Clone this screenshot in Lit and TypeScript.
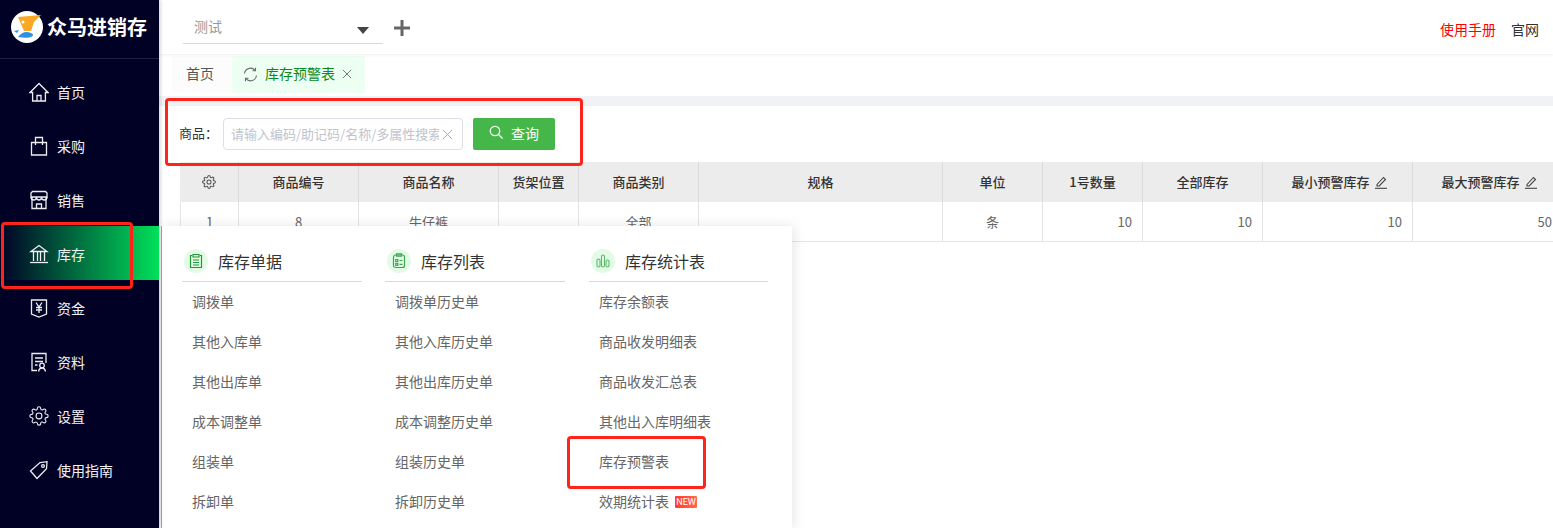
import { LitElement, html, css, svg } from "lit";
import { customElement } from "lit/decorators.js";

const GEAR = "M19.4 15a1.65 1.65 0 0 0 .33 1.82l.06.06a2 2 0 0 1 0 2.83 2 2 0 0 1-2.83 0l-.06-.06a1.65 1.65 0 0 0-1.82-.33 1.65 1.65 0 0 0-1 1.51V21a2 2 0 0 1-2 2 2 2 0 0 1-2-2v-.09A1.65 1.65 0 0 0 9 19.4a1.65 1.65 0 0 0-1.82.33l-.06.06a2 2 0 0 1-2.83 0 2 2 0 0 1 0-2.83l.06-.06a1.65 1.65 0 0 0 .33-1.82 1.65 1.65 0 0 0-1.51-1H3a2 2 0 0 1-2-2 2 2 0 0 1 2-2h.09A1.65 1.65 0 0 0 4.6 9a1.65 1.65 0 0 0-.33-1.82l-.06-.06a2 2 0 0 1 0-2.83 2 2 0 0 1 2.83 0l.06.06a1.65 1.65 0 0 0 1.82.33H9a1.65 1.65 0 0 0 1-1.51V3a2 2 0 0 1 2-2 2 2 0 0 1 2 2v.09a1.65 1.65 0 0 0 1 1.51 1.65 1.65 0 0 0 1.82-.33l.06-.06a2 2 0 0 1 2.83 0 2 2 0 0 1 0 2.83l-.06.06a1.65 1.65 0 0 0-.33 1.82V9a1.65 1.65 0 0 0 1.51 1H21a2 2 0 0 1 2 2 2 2 0 0 1-2 2h-.09a1.65 1.65 0 0 0-1.51 1z";

const ICONS: Record<string, unknown> = {
  home: svg`<path d="M1 10.500 10 1.500l9 9h-2.600V19H3.600v-8.500z"/><path d="M8 19v-5.500h4V19"/>`,
  bag: svg`<path d="M2.500 6.500h15V19h-15z"/><path d="M6.500 9V1.500h7V9"/>`,
  store: svg`<path d="M3.500 1.500h13l1.500 1.500v4H2V3z"/><path d="M3 7v11.500h14V7"/><path d="M2 7c0 4 5.500 4 5.500 0 0 4 5 4 5 0 0 4 5.500 4 5.500 0"/><path d="M7.500 18.500v-4.500h5v4.500"/>`,
  bank: svg`<path d="M2 7.500 10 1.500l8 6z"/><path d="M4.500 8v9M8.500 8v9M11.500 8v9M15.500 8v9"/><path d="M1 18.500h18"/>`,
  money: svg`<path d="M2.500 2h15v14l-7.500 3-7.500-3z"/><path d="M7 4.500l3 4.500 3-4.500M10 9v6M7 9.500h6M7 12h6"/>`,
  doc: svg`<path d="M8 18.500H3V1.500h14v9.500"/><path d="M6 6h8M6 9.500h8M6 13h2.500"/><circle cx="13" cy="13.500" r="2.300"/><path d="M9.500 19.500c.5-2.500 2-3.500 3.500-3.500s3 1 3.500 3.500"/>`,
  gear: svg`<g transform="scale(.833)"><path d="${GEAR}"/><circle cx="12" cy="12" r="3.500"/></g>`,
  tag: svg`<path d="M1.500 11 11 2.500l7-.8-.5 7L8 18.500z"/><circle cx="14" cy="6" r="1.400"/>`,
};

const MENU = [
  ["home", "首页"], ["bag", "采购"], ["store", "销售"], ["bank", "库存"],
  ["money", "资金"], ["doc", "资料"], ["gear", "设置"], ["tag", "使用指南"],
];

const COLS = [
  { head: "商品编号", cell: "8" }, { head: "商品名称", cell: "牛仔裤" }, { head: "货架位置", cell: "" },
  { head: "商品类别", cell: "全部" }, { head: "规格", cell: "" }, { head: "单位", cell: "条" },
  { head: "1号数量", cell: "10", num: true }, { head: "全部库存", cell: "10", num: true },
  { head: "最小预警库存", cell: "10", num: true, edit: true }, { head: "最大预警库存", cell: "50", num: true, edit: true },
];

const PANEL = [
  { title: "库存单据", icon: "a", items: ["调拨单", "其他入库单", "其他出库单", "成本调整单", "组装单", "拆卸单"] },
  { title: "库存列表", icon: "b", items: ["调拨单历史单", "其他入库历史单", "其他出库历史单", "成本调整历史单", "组装历史单", "拆卸历史单"] },
  { title: "库存统计表", icon: "c", items: ["库存余额表", "商品收发明细表", "商品收发汇总表", "其他出入库明细表", "库存预警表", "效期统计表"] },
];

const PANEL_ICONS: Record<string, unknown> = {
  a: svg`<g fill="none" stroke="#1f9a35" stroke-width="1.200"><path d="M8 6.500H6.500v12h11v-12H16"/><path d="M9 5.500h6v2.500H9z"/><path d="M9 11h6M9 13.500h6M9 16h6"/></g>`,
  b: svg`<g fill="none" stroke="#3fa650" stroke-width="1.200"><rect x="6.500" y="6" width="11" height="12.500" rx="2"/><path d="M9.500 4.800h5v2.400h-5z"/><path d="M8.800 10.500h2v2h-2zM8.800 14.300h2v2h-2zM12.500 11.500h3M12.500 15.300h3"/></g>`,
  c: svg`<g fill="none" stroke="#5cb86b" stroke-width="1.100"><rect x="6" y="10" width="3" height="8" rx="1.500"/><rect x="10.500" y="6" width="3" height="12" rx="1.500"/><rect x="15" y="11" width="3" height="7" rx="1.500"/></g>`,
};

@customElement("app-root")
export class AppRoot extends LitElement {
  static styles = css`
    :host {
      display: flex;
      position: relative;
      width: 1553px;
      height: 528px;
      overflow: hidden;
      background: #fff;
      font-family: "Noto Sans CJK SC", "Liberation Sans", sans-serif;
      color: #333;
    }
    .side {
      width: 159px;
      flex: none;
      background: #010126;
      color: #fff;
      position: relative;
      z-index: 3;
      box-shadow: 2px 0 3px rgba(0, 0, 0, .14);
    }
    .logo {
      height: 59px;
      box-sizing: border-box;
      border-bottom: 1px solid #22223f;
      display: flex;
      align-items: center;
      padding: 0 0 5px 11px;
      gap: 4px;
      font-size: 20px;
      font-weight: 700;
      line-height: 24px;
      margin-bottom: 5px;
    }
    .logo svg { width: 32px; height: 32px; flex: none; }
    .nav {
      height: 54px;
      display: flex;
      align-items: center;
      padding-left: 29px;
      gap: 8px;
      font-size: 14px;
      line-height: 20px;
      color: #f2f2f6;
    }
    .nav.on { background: linear-gradient(90deg, #010126 0%, #00e05a 100%); }
    .nav span { position: relative; top: 1px; }
    .nav svg { width: 20px; height: 20px; flex: none; fill: none; stroke: #eeeef2; stroke-width: 1.300; position: relative; top: 1px; }
    .main { flex: 1; min-width: 0; display: flex; flex-direction: column; }
    .top {
      height: 54px;
      flex: none;
      display: flex;
      align-items: flex-start;
      padding-left: 24px;
      box-shadow: 0 1px 3px rgba(0, 0, 0, .07);
      position: relative;
      z-index: 1;
    }
    .select {
      width: 200px;
      height: 44px;
      box-sizing: border-box;
      border-bottom: 1px solid #d9d9d9;
      display: flex;
      align-items: center;
      justify-content: space-between;
      padding: 9px 14px 0 11px;
      font-size: 14px;
      line-height: 20px;
      color: #999;
    }
    .select i {
      width: 0; height: 0; margin-top: 9px;
      border-left: 6px solid transparent;
      border-right: 6px solid transparent;
      border-top: 7px solid #444;
    }
    .plus { margin: 20px 0 0 11px; width: 16px; height: 16px; flex: none; }
    .links {
      margin-left: auto;
      padding: 19px 14px 0 0;
      display: flex;
      gap: 15px;
      font-size: 14px;
      line-height: 20px;
    }
    .links .red { color: #f00; }
    .tabs { height: 42px; flex: none; display: flex; padding: 2px 0 0 13px; box-sizing: border-box; font-size: 14px; line-height: 20px; }
    .tab { height: 37px; box-sizing: border-box; padding-bottom: 3px; display: flex; align-items: center; }
    .tab.home { width: 60px; justify-content: center; color: #555; background: #fcfcfc; padding-right: 4px; }
    .tab.act {
      width: 133px;
      background: #edfff3;
      color: #0a8a1f;
      padding-left: 11px;
      gap: 7px;
    }
    .tab.act svg { width: 15px; height: 15px; flex: none; margin-top: 2px; }
    .tab.act .x { width: 10px; height: 10px; margin-left: 0; }
    .band { height: 10px; flex: none; background: #f0f2f5; }
    .content { flex: 1; padding: 12px 0 0 21px; min-height: 0; }
    .search { display: flex; align-items: center; height: 32px; font-size: 13px; color: #333; }
    .search label { width: 44px; margin-left: -1px; flex: none; line-height: 20px; padding-bottom: 2px; }
    .input {
      width: 240px;
      height: 32px;
      box-sizing: border-box;
      border: 1px solid #dcdfe6;
      border-radius: 4px;
      display: flex;
      align-items: center;
      padding: 0 4px 2px 7px;
      gap: 3px;
      color: #c0c4cc;
    }
    .input span { flex: 1; min-width: 0; overflow: hidden; white-space: nowrap; }
    .input svg { width: 11px; height: 11px; flex: none; margin: 2px 5px 0 0; }
    .btn {
      width: 82px;
      height: 32px;
      margin-left: 10px;
      box-sizing: border-box;
      padding-bottom: 2px;
      background: #45b649;
      border-radius: 2px;
      color: #fff;
      display: flex;
      align-items: center;
      justify-content: center;
      gap: 8px;
      font-size: 14px;
    }
    .btn svg { width: 14px; height: 14px; margin-top: -2px; }
    .table {
      margin-top: 12px;
      width: 1383px;
      display: grid;
      grid-template-columns: 59px 120px 140px 80px 120px 244px 100px 100px 120px 150px 150px;
      grid-auto-rows: 40px;
      font-size: 13px;
    }
    .th, .td {
      display: flex;
      align-items: center;
      justify-content: center;
      box-sizing: border-box;
      border-right: 1px solid #e3e3e3;
      white-space: nowrap;
    }
    .th { background: #ececec; font-weight: 500; color: #333; border-right-color: #dcdcdc; gap: 4px; padding-bottom: 2px; }
    .th.edit { padding-left: 4px; }
    .th svg { width: 14px; height: 14px; flex: none; margin-top: 2px; }
    .td { color: #666; border-bottom: 1px solid #e6e6e6; }
    .td.num { justify-content: flex-end; padding-right: 10px; }
    .td.first { border-left: 1px solid #e6e6e6; }
    .panel {
      position: absolute;
      left: 161px;
      top: 226px;
      width: 631px;
      height: 302px;
      box-sizing: border-box;
      background: #fff;
      border-left: 1px solid #7fbf85;
      box-shadow: 2px 0 12px rgba(0, 0, 0, .1);
      z-index: 2;
      padding: 23px 0 0 20px;
      display: grid;
      grid-template-columns: 180px 180px 180px;
      column-gap: 23px;
    }
    .pcol:last-child { margin-left: 1px; }
    .phead {
      height: 32px;
      border-bottom: 1px solid #d9d9d9;
      display: flex;
      align-items: flex-start;
      padding-left: 2px;
      gap: 10px;
      font-size: 16px;
      line-height: 24px;
      color: #333;
    }
    .phead svg { width: 24px; height: 24px; flex: none; }
    .pitem {
      height: 40px;
      box-sizing: border-box;
      padding: 0 0 2px 10px;
      display: flex;
      align-items: center;
      gap: 6px;
      font-size: 14px;
      color: #666;
    }
    .new {
      width: 22px;
      height: 12px;
      margin-top: 2px;
      background: linear-gradient(90deg, #ff3b30, #ff6b4a);
      border-radius: 1px;
      color: #fff;
      font: 9px/12px "Roboto", sans-serif;
      text-align: center;
    }
    .mark {
      position: absolute;
      box-sizing: border-box;
      border: 3px solid #ff2419;
      border-radius: 4px;
      z-index: 5;
    }
    .m1 { left: 1px; top: 222px; width: 132px; height: 67px; }
    .m2 { left: 165px; top: 98px; width: 418px; height: 68px; }
    .m3 { left: 567px; top: 436px; width: 139px; height: 53px; }
  `;

  render() {
    const pencil = html`<svg viewBox="0 0 14 14" fill="none" stroke="#444" stroke-width="1.100"><path d="M3 9.500 9.500 2.500l2 1.900-6.300 6.600H3z"/><path d="M1 13.300h12"/></svg>`;
    const cross = html`<svg class="x" viewBox="0 0 11 11" fill="none" stroke="#777" stroke-width="1.100"><path d="M1 1l9 9M10 1l-9 9"/></svg>`;
    return html`
      <aside class="side">
        <div class="logo">
          <svg viewBox="0 0 32 32">
            <circle cx="16" cy="16" r="16" fill="#fff"/>
            <path d="M7 6 30 4 23 11 20 20 13 20z" fill="#f9a825"/>
            <circle cx="12" cy="11" r="1.500" fill="#fff"/>
            <path d="M7 26c4-5 8-6 13-4 2 1 3 2 1 3.500-4 2-9 1-14 .5z" fill="#2f8fe0"/>
            <path d="M3 20l5-1-2 3z" fill="#2f8fe0"/>
          </svg>
          <span>众马进销存</span>
        </div>
        ${MENU.map(([icon, label]) => html`
          <div class="nav ${label === "库存" ? "on" : ""}">
            <svg viewBox="0 0 20 20">${ICONS[icon]}</svg><span>${label}</span>
          </div>`)}
      </aside>
      <div class="main">
        <header class="top">
          <div class="select"><span>测试</span><i></i></div>
          <svg class="plus" viewBox="0 0 16 16"><path d="M8 0v16M0 8h16" stroke="#666" stroke-width="3"/></svg>
          <div class="links"><span class="red">使用手册</span><span>官网</span></div>
        </header>
        <nav class="tabs">
          <div class="tab home">首页</div>
          <div class="tab act">
            <svg viewBox="0 0 15 15" fill="none" stroke="#666" stroke-width="1.100"><path d="M1.500 6.500A6 6 0 0 1 12 3.300M13.500 8.500A6 6 0 0 1 3 11.700"/><path d="M12.500 .8v3h-3M2.500 14.200v-3h3"/></svg>
            <span>库存预警表</span>
            ${cross}
          </div>
        </nav>
        <div class="band"></div>
        <main class="content">
          <div class="search">
            <label>商品：</label>
            <div class="input"><span>请输入编码/助记码/名称/多属性搜索</span><svg viewBox="0 0 11 11" fill="none" stroke="#a8acb3" stroke-width="1"><path d="M1 1l9 9M10 1l-9 9"/></svg></div>
            <div class="btn"><svg viewBox="0 0 14 14" fill="none" stroke="#fff" stroke-width="1.300"><circle cx="6" cy="6" r="4.700"/><path d="M9.500 9.500 13.500 13.500"/></svg><span>查询</span></div>
          </div>
          <div class="table">
            <div class="th"><svg viewBox="0 0 24 24" fill="none" stroke="#555" stroke-width="1.800"><path d="${GEAR}"/><circle cx="12" cy="12" r="3.500"/></svg></div>
            ${COLS.map((c) => html`<div class="th ${c.edit ? "edit" : ""}"><span>${c.head}</span>${c.edit ? pencil : ""}</div>`)}
            <div class="td first">1</div>
            ${COLS.map((c) => html`<div class="td ${c.num ? "num" : ""}">${c.cell}</div>`)}
          </div>
        </main>
      </div>
      <section class="panel">
        ${PANEL.map((p) => html`
          <div class="pcol">
            <div class="phead">
              <svg viewBox="0 0 24 24"><circle cx="12" cy="12" r="12" fill="#e3fbe6"/>${PANEL_ICONS[p.icon]}</svg>
              <span>${p.title}</span>
            </div>
            ${p.items.map((t) => html`<div class="pitem"><span>${t}</span>${t === "效期统计表" ? html`<span class="new">NEW</span>` : ""}</div>`)}
          </div>`)}
      </section>
      <div class="mark m1"></div>
      <div class="mark m2"></div>
      <div class="mark m3"></div>
    `;
  }
}
